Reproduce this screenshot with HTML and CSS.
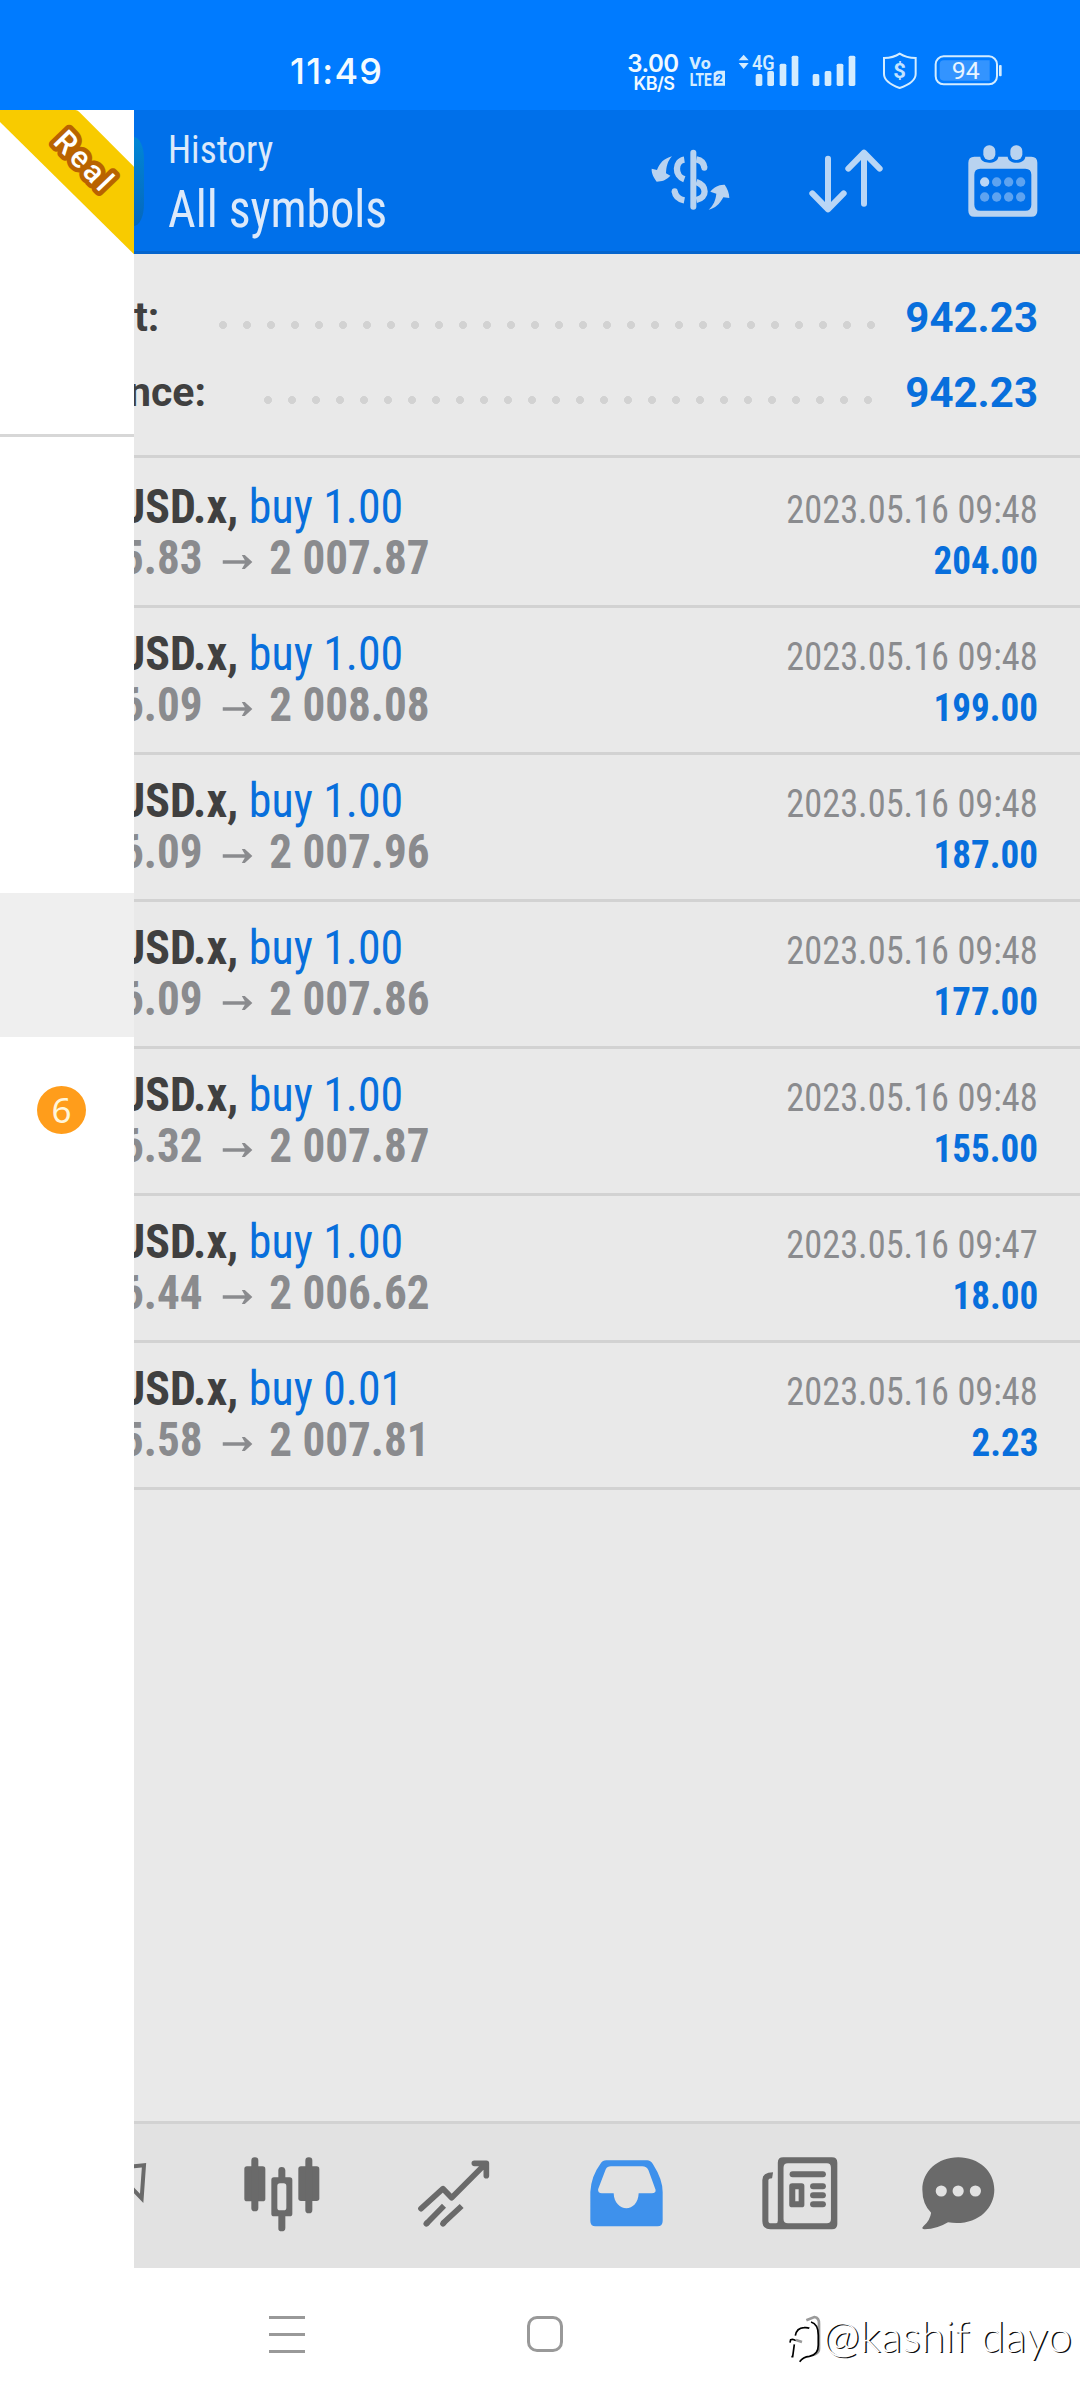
FILE: index.html
```html
<!DOCTYPE html>
<html lang="en">
<head>
<meta charset="utf-8">
<title>History</title>
<link rel="stylesheet" href="styles.css">
</head>
<body>
<header class="status">
  <time class="clock">11:49</time>
  <div class="status-icons">
    <div class="speed"><b>3.00</b><span>KB/S</span></div>
    <svg class="volte" width="38" height="34" viewBox="270 74 114 102" fill="#d3ecff"><text x="271" y="117" font-size="52" font-weight="800" textLength="64" lengthAdjust="spacingAndGlyphs">Vo</text><text x="272" y="166" font-size="55" font-weight="800" textLength="66" lengthAdjust="spacingAndGlyphs">LTE</text><path d="M344 128l10-7h24v45h-34z"/><text x="349" y="158" font-size="40" font-weight="700" fill="#007bff" textLength="23" lengthAdjust="spacingAndGlyphs">2</text></svg>
    <svg class="signal" width="118" height="36" viewBox="416 66 354 108" fill="#d3ecff"><path d="M418 91l15-17 15 17zM418 99h30l-15 18z"/><text x="458" y="119" font-size="62" font-weight="600" textLength="68" lengthAdjust="spacingAndGlyphs">4G</text><rect x="469" y="132" width="20" height="36" rx="5"/><rect x="504" y="123" width="20" height="45" rx="5"/><rect x="541" y="101" width="20" height="67" rx="5"/><rect x="577" y="77" width="20" height="91" rx="5"/><rect x="640" y="132" width="20" height="36" rx="5"/><rect x="676" y="123" width="20" height="45" rx="5"/><rect x="712" y="101" width="20" height="67" rx="5"/><rect x="748" y="77" width="20" height="91" rx="5"/></svg>
    <svg class="shield" width="36" height="38" viewBox="846 66 108 114"><path d="M899 71C886 80 870 84 852 84V132C852 153 874 165 899 174C925 165 947 153 947 132V84C929 84 913 80 899 71Z" fill="none" stroke="#d3ecff" stroke-width="6"/><text x="880" y="145" font-size="60" font-weight="700" fill="#c3e3ff" textLength="38" lengthAdjust="spacingAndGlyphs">$</text></svg>
    <svg class="battery" width="68" height="32" viewBox="1003 76 204 96"><rect x="1008" y="80" width="184" height="84" rx="24" fill="none" stroke="#d3ecff" stroke-width="6"/><path d="M1020 105q0-13 13-13H1170V153H1033q-13 0-13-13z" fill="#3394ff"/><rect x="1198" y="106" width="8" height="34" rx="3" fill="#d3ecff"/><text x="1056" y="149" font-size="73" fill="#e9f5ff" textLength="84" lengthAdjust="spacingAndGlyphs">94</text></svg>
  </div>
</header>

<main class="app">
  <aside class="drawer">
    <div class="account"><div class="ribbon"><svg width="134" height="145" viewBox="0 30 402 435"><path d="M0 30H226Q232 30 238 36L402 200V463L0 66Z" fill="#f8cb00"/><text transform="translate(156 128) rotate(46)" font-size="91" textLength="209" lengthAdjust="spacing" font-weight="500">Real</text></svg></div></div>
    <div class="drawer-gap"></div>
    <div class="selected"></div>
    <div class="messages"><span class="badge">6</span></div>
  </aside>

  <section class="history">
    <header class="toolbar">
      <div class="app-icon"></div>
      <div class="titles"><h2 class="sub">History</h2><h1 class="title">All symbols</h1></div>
      <div class="actions">
        <svg width="80" height="64" viewBox="92 88 240 192" fill="#b9d3f0"><path d="M155 110C130 117 118 130 110 151L94 147C93 162 101 174 109 186C124 185 138 182 150 168L137 161C138 140 142 124 155 110ZM265 270C285 265 297 255 309 233L327 235C327 220 321 207 313 195C295 194 280 203 270 216L288 222C286 241 280 256 265 270Z"/><rect x="210" y="90" width="18" height="180" rx="9"/><g fill="none" stroke="#b9d3f0" stroke-width="19"><path d="M192 120C164 124 161 168 192 179M228 119Q250 123 252 144" /><path d="M228 187C260 198 262 234 228 241M192 242Q166 237 163 215"/></g><circle cx="252" cy="144" r="9"/><circle cx="163" cy="215" r="9"/></svg>
        <svg width="74" height="64" viewBox="567 88 222 192" fill="none" stroke="#b9d6f6" stroke-width="18" stroke-linecap="round" stroke-linejoin="round"><path d="M624 117V267M577 221L624 269L671 221M732 252V102M685 147L732 99L779 147"/></svg>
        <svg width="70" height="72" viewBox="1043 73 210 216"><path fill-rule="evenodd" fill="#b9d3f0" d="M1062 108H1080V109C1082 132 1132 132 1134 108H1162C1164 132 1213 132 1215 108H1233Q1251 108 1251 126V270Q1251 288 1233 288H1062Q1044 288 1044 270V126Q1044 108 1062 108ZM1080 144Q1062 144 1062 162V252Q1062 270 1080 270H1215Q1233 270 1233 252V162Q1233 144 1215 144Z"/><g fill="#b9d3f0"><rect x="1089" y="74" width="36" height="44" rx="17"/><rect x="1170" y="74" width="36" height="44" rx="17"/></g><g fill="#5ea3f0"><circle cx="1093" cy="184" r="14" fill="#b9d6f6"/><circle cx="1129" cy="184" r="14"/><circle cx="1165" cy="184" r="14"/><circle cx="1201" cy="184" r="14"/><circle cx="1093" cy="229" r="14"/><circle cx="1129" cy="229" r="14"/><circle cx="1165" cy="229" r="14"/><circle cx="1201" cy="229" r="14"/></g></svg>
      </div>
    </header>

    <div class="summary">
      <div class="total"><span class="label">t:</span><i class="dots dots-a"></i><b class="sum">942.23</b></div>
      <div class="total"><span class="label label-cut">nce:</span><i class="dots dots-b"></i><b class="sum">942.23</b></div>
    </div>

    <ul class="deals">
      <li class="deal"><div class="line"><span class="what"><b>USD.x,</b> <em>buy 1.00</em></span><time>2023.05.16 09:48</time></div><div class="line"><span class="price"><span>5.83</span><svg class="arrow" viewBox="0 0 90 40"><path d="M0 20H72"/><path class="head" d="M58 0H67L90 20L67 40H58L70 20Z"/></svg><span>2 007.87</span></span><b class="profit">204.00</b></div></li>
      <li class="deal"><div class="line"><span class="what"><b>USD.x,</b> <em>buy 1.00</em></span><time>2023.05.16 09:48</time></div><div class="line"><span class="price"><span>6.09</span><svg class="arrow" viewBox="0 0 90 40"><path d="M0 20H72"/><path class="head" d="M58 0H67L90 20L67 40H58L70 20Z"/></svg><span>2 008.08</span></span><b class="profit">199.00</b></div></li>
      <li class="deal"><div class="line"><span class="what"><b>USD.x,</b> <em>buy 1.00</em></span><time>2023.05.16 09:48</time></div><div class="line"><span class="price"><span>6.09</span><svg class="arrow" viewBox="0 0 90 40"><path d="M0 20H72"/><path class="head" d="M58 0H67L90 20L67 40H58L70 20Z"/></svg><span>2 007.96</span></span><b class="profit">187.00</b></div></li>
      <li class="deal"><div class="line"><span class="what"><b>USD.x,</b> <em>buy 1.00</em></span><time>2023.05.16 09:48</time></div><div class="line"><span class="price"><span>6.09</span><svg class="arrow" viewBox="0 0 90 40"><path d="M0 20H72"/><path class="head" d="M58 0H67L90 20L67 40H58L70 20Z"/></svg><span>2 007.86</span></span><b class="profit">177.00</b></div></li>
      <li class="deal"><div class="line"><span class="what"><b>USD.x,</b> <em>buy 1.00</em></span><time>2023.05.16 09:48</time></div><div class="line"><span class="price"><span>6.32</span><svg class="arrow" viewBox="0 0 90 40"><path d="M0 20H72"/><path class="head" d="M58 0H67L90 20L67 40H58L70 20Z"/></svg><span>2 007.87</span></span><b class="profit">155.00</b></div></li>
      <li class="deal"><div class="line"><span class="what"><b>USD.x,</b> <em>buy 1.00</em></span><time>2023.05.16 09:47</time></div><div class="line"><span class="price"><span>6.44</span><svg class="arrow" viewBox="0 0 90 40"><path d="M0 20H72"/><path class="head" d="M58 0H67L90 20L67 40H58L70 20Z"/></svg><span>2 006.62</span></span><b class="profit">18.00</b></div></li>
      <li class="deal"><div class="line"><span class="what"><b>USD.x,</b> <em>buy 0.01</em></span><time>2023.05.16 09:48</time></div><div class="line"><span class="price"><span>5.58</span><svg class="arrow" viewBox="0 0 90 40"><path d="M0 20H72"/><path class="head" d="M58 0H67L90 20L67 40H58L70 20Z"/></svg><span>2 007.81</span></span><b class="profit">2.23</b></div></li>
    </ul>

    <nav class="tabs">
      <svg class="tab-quotes" width="13" height="38" viewBox="72 188 39 114"><path d="M60 199L102 195L95 294L60 258" fill="none" stroke="#6a6a6a" stroke-width="12"/></svg>
      <svg class="tab-chart" width="76" height="75" viewBox="401 170 228 225" fill="#6a6a6a"><rect x="402" y="198" width="63" height="105" rx="8"/><rect x="423" y="171" width="21" height="162" rx="10"/><rect x="564" y="198" width="63" height="104" rx="8"/><rect x="585" y="171" width="21" height="168" rx="10"/><path fill-rule="evenodd" d="M491 231H504V210Q504 200 514 200T525 210V231H538Q546 231 546 239V340Q546 348 538 348H525V383Q525 393 514 393T504 383V348H491Q483 348 483 340V239Q483 231 491 231ZM509 249Q501 249 501 257V322Q501 330 509 330H520Q528 330 528 322V257Q528 249 520 249Z"/></svg>
      <svg class="tab-trade" width="72" height="67" viewBox="923 179 216 201" fill="none" stroke="#6a6a6a" stroke-width="17" stroke-linecap="round" stroke-linejoin="round"><path d="M932 325L998 265L1024 292L1124 192M1092 189H1128V226"/><g stroke-linecap="butt"><path d="M948 370L1001 316M997 370L1054 317"/></g><path d="M948 370l2-2M998 370l2-2"/></svg>
      <svg class="tab-history" width="73" height="67" viewBox="118 179 216 201" preserveAspectRatio="none"><path fill="#3e91ec" fill-rule="evenodd" d="M166 180H287Q297 180 304 191Q333 237 333 275V362Q333 378 318 378H134Q119 378 119 362V275Q121 228 149 190Q156 180 166 180ZM180 198Q169 198 164 208L142 267Q141 279 153 279H188C190 337 260 340 262 279H301Q314 278 312 268L291 210Q286 198 272 198Z"/></svg>
      <svg class="tab-news" width="76" height="73" viewBox="627 170 226 219" preserveAspectRatio="none" fill="#6a6a6a"><path fill-rule="evenodd" d="M690 171H835Q851 171 851 187V371Q851 387 835 387H652Q628 387 628 363V239Q628 216 660 216L657 234Q646 234 646 240V361Q646 369 654 369H668Q674 369 674 361V187Q674 171 690 171ZM704 189Q691 189 691 202V356Q691 369 704 369H820Q832 369 832 356V202Q832 189 820 189Z"/><rect x="709" y="213" width="108" height="18" rx="9"/><rect x="770" y="249" width="47" height="18" rx="9"/><rect x="770" y="276" width="47" height="18" rx="9"/><rect x="770" y="303" width="47" height="18" rx="9"/><path fill-rule="evenodd" d="M717 249H745Q753 249 753 257V313Q753 321 745 321H717Q708 321 708 313V257Q708 249 717 249ZM726 267V303H736V267Z"/></svg>
      <svg class="tab-chat" width="73" height="73" viewBox="1100 170 216 219" preserveAspectRatio="none"><path fill="#6a6a6a" d="M1207 171C1268 171 1314 213 1314 268C1314 329 1258 379 1177 366Q1145 386 1108 387Q1096 386 1104 378Q1124 360 1127 337Q1101 311 1101 268C1101 213 1147 171 1207 171Z"/><g fill="#e2e2e2"><circle cx="1157" cy="272" r="16.500"/><circle cx="1207" cy="272" r="16.500"/><circle cx="1258" cy="272" r="16.500"/></g></svg>
    </nav>
  </section>
</main>

<footer class="sysnav">
  <span class="recent"></span>
  <span class="home"></span>
  <div class="mark"><svg width="34" height="56" viewBox="54 42 102 168" fill="none"><path d="M109 61L133 51Q148 53 147 72V145Q148 158 132 164M78 120L96 126" stroke="#9a9a9a" stroke-width="8"/><path d="M76 107Q80 84 102 83Q113 82 118 85M123 66Q145 72 145 106V135Q145 165 118 169Q99 171 89 185M60 128L62 119Q70 116 77 122M73 133L68 170H64" stroke="#000" stroke-width="5"/></svg><span class="author">@kashif dayo</span></div>
</footer>
</body>
</html>
```
FILE: styles.css
```css
* { box-sizing: border-box; margin: 0; padding: 0; }
body { width: 1080px; height: 2400px; display: flex; flex-direction: column; overflow: hidden; background: #fff; font-family: Roboto, "Liberation Sans", sans-serif; }
svg { display: block; flex: none; overflow: visible; }

.status { height: 110px; background: #007bff; display: flex; justify-content: space-between; padding: 0 78px 0 290px; }
.clock { font: 500 36px/44px Inter, sans-serif; color: #f3faff; padding-top: 49px; letter-spacing: 1.2px; }
.status-icons { display: flex; align-items: flex-start; padding-top: 52px; }
.speed { width: 52px; display: flex; flex-direction: column; align-items: center; color: #f0f9ff; font-family: Inter, sans-serif; margin-right: 10px; }
.speed b { font-size: 24px; line-height: 23px; font-weight: 600; white-space: nowrap; letter-spacing: -.5px; }
.speed span { font-size: 18px; line-height: 17px; font-weight: 600; padding-left: 2px; letter-spacing: -.5px; }
.volte { margin: 3px 11px 0 0; }
.signal { margin-right: 26px; }
.shield { margin-right: 16px; }
.battery { margin-top: 3px; }

.app { height: 2158px; display: flex; }
.drawer { width: 134px; flex: none; background: #fff; overflow: hidden; }
.account { height: 327px; border-bottom: 3px solid #d7d7d7; }
.ribbon text { fill: #fff; stroke: #b96300; stroke-width: 28px; stroke-linejoin: round; paint-order: stroke; }
.drawer-gap { height: 456px; }
.selected { height: 144px; background: #efefef; }
.messages { height: 145px; padding: 49px 0 0 37px; }
.badge { display: flex; align-items: center; justify-content: center; width: 49px; height: 48px; border-radius: 50%; background: #ff9d1b; color: #fff6da; font: 35px/48px "Noto Sans", sans-serif; }

.history { flex: 1; min-width: 0; background: #e9e9e9; display: flex; flex-direction: column; overflow: hidden; font-stretch: 75%; }
.toolbar { height: 144px; flex: none; background: #0070ea; border-bottom: 3px solid #0565cd; display: flex; }
.app-icon { width: 10px; height: 89px; margin-top: 27px; border-radius: 0 10px 10px 0 / 0 22px 22px 0; background: linear-gradient(#0087d6, #0567bd); }
.titles { padding: 17px 0 0 24px; flex: 1; color: #dce9fa; white-space: nowrap; }
.sub { font: 400 39px/46px "Roboto Condensed", Roboto, sans-serif; font-stretch: 75%; transform: scaleX(.955); transform-origin: 0 50%; }
.title { font: 400 51px/60px "Roboto Condensed", Roboto, sans-serif; font-stretch: 75%; padding-top: 7px; transform: scaleX(.94); transform-origin: 0 50%; }
.actions { display: flex; align-items: flex-start; padding: 39px 42px 0 0; }
.actions svg:nth-child(1) { margin-right: 78px; }
.actions svg:nth-child(2) { margin-right: 85px; }
.actions svg:nth-child(3) { margin-top: -4px; }

.summary { height: 201px; flex: none; padding: 26px 42px 0 0; }
.total { height: 75px; display: flex; justify-content: space-between; align-items: flex-start; font-stretch: 100%; line-height: 75px; }
.label { font-size: 41px; font-weight: 700; color: #404040; }
.label-cut { margin-left: -6px; }
.sum { font-size: 42px; color: #086fdc; line-height: 76px; }
.dots { height: 8px; margin-top: 41px; background: radial-gradient(circle, #d2d2d2 3.700px, transparent 4.300px) 0 0 / 24px 8px; }
.dots-a { width: 672px; margin-left: auto; margin-right: 22px; }
.dots-b { width: 624px; margin-left: auto; margin-right: 25px; }

.deals { list-style: none; flex: 1; border-top: 3px solid #d2d2d2; padding-top: 3px; font-family: "Roboto Condensed", Roboto, sans-serif; }
.deal { height: 147px; border-bottom: 3px solid #d2d2d2; padding: 20px 42px 0 0; }
.line { height: 51px; display: flex; justify-content: space-between; line-height: 52px; white-space: nowrap; }
.what, .price { font-size: 48px; transform-origin: 0 50%; }
.what { color: #404040; margin-left: -15px; transform: scaleX(.955); }
.what em { font-style: normal; color: #086fdc; }
.price { color: #8a8b8e; font-weight: 700; display: flex; margin-left: -13px; transform: scaleX(.94); }
.arrow { width: 32px; height: 14px; margin: 23px 18px 0 21px; }
.arrow path { stroke: #8a8b8e; stroke-width: 10px; fill: none; }
.arrow .head { fill: #8a8b8e; stroke: none; }
.line time, .profit { font-size: 39px; line-height: 59px; transform-origin: 100% 50%; }
.line time { color: #8a8b8e; transform: scaleX(.932); }
.profit { color: #086fdc; transform: scaleX(.95); }

.tabs { height: 147px; flex: none; background: #e2e2e2; border-top: 3px solid #d2d2d2; display: flex; align-items: flex-start; }
.tab-quotes { margin-top: 39px; }
.tab-chart { margin: 33px 0 0 97px; }
.tab-trade { margin: 36px 0 0 98px; }
.tab-history { margin: 36px 0 0 100px; }
.tab-news { margin: 33px 0 0 99px; }
.tab-chat { margin: 33px 0 0 84px; }

.sysnav { height: 132px; background: #fff; display: flex; align-items: flex-start; padding-left: 269px; }
.recent { width: 36px; height: 37px; margin-top: 48px; border-top: 3px solid #999; border-bottom: 3px solid #999; background: linear-gradient(#999, #999) 0 14px / 36px 3px no-repeat; }
.home { width: 36px; height: 36px; margin: 48px 0 0 222px; border: 3px solid #999; border-radius: 10px; }
.mark { display: flex; margin: 46px 0 0 225px; }
.author { font: 300 44px/50px Lato, sans-serif; color: #fff; text-shadow: 1.500px 1px 0 #111; margin: -4px 0 0 1px; white-space: nowrap; }
```
